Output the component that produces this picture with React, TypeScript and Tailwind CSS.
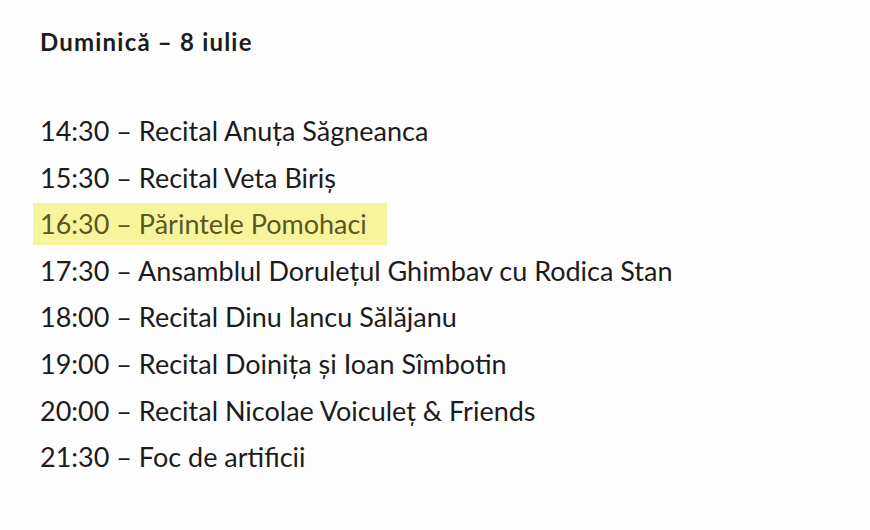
export default function App() {
  const items = [
    "14:30 – Recital Anuța Săgneanca",
    "15:30 – Recital Veta Biriș",
    "16:30 – Părintele Pomohaci",
    "17:30 – Ansamblul Dorulețul Ghimbav cu Rodica Stan",
    "18:00 – Recital Dinu Iancu Sălăjanu",
    "19:00 – Recital Doinița și Ioan Sîmbotin",
    "20:00 – Recital Nicolae Voiculeț & Friends",
    "21:30 – Foc de artificii",
  ];
  return (
    <div
      className="w-[870px] h-[530px] bg-[#fdfdfd] text-[#1c1c1c] pl-[40px] pt-[22px]"
      style={{ fontFamily: "Lato, 'Open Sans', sans-serif" }}
    >
      <div className="text-[24px] font-bold leading-[40px] tracking-[1.2px]">Duminică – 8 iulie</div>
      <div className="mt-[46px] flex flex-col">
        {items.map((t, i) =>
          i === 2 ? (
            <div key={i} className="h-[46.6px] flex items-center">
              <span className="-ml-[7px] pl-[7px] pr-[20px] h-[42px] flex items-center bg-[#f7f59c] text-[#5a5820] text-[27px]">
                {t}
              </span>
            </div>
          ) : (
            <div key={i} className="h-[46.6px] flex items-center text-[27px]">
              {t}
            </div>
          )
        )}
      </div>
    </div>
  );
}
